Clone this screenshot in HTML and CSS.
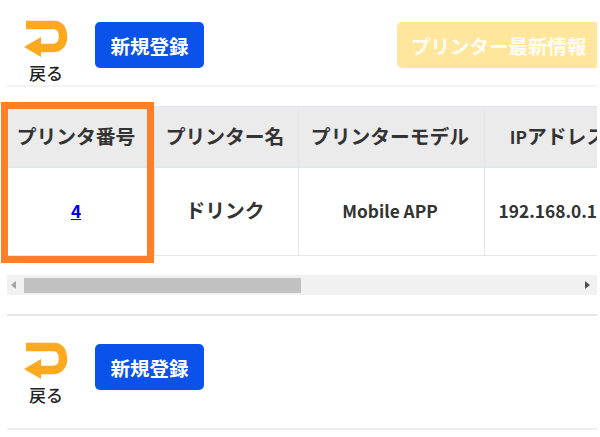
FILE: index.html
```html
<!DOCTYPE html>
<html lang="ja">

<head>
  <meta charset="UTF-8">
  <meta name="viewport" content="width=device-width, initial-scale=1.0">
  <title>プリンタ一覧</title>
  <link rel="stylesheet" href="styles.css">
</head>

<body>
  <div class="page">
    <div class="toolbar">
      <a class="back-link" href="#">
        <svg class="back-icon" width="44" height="38" viewBox="0 0 44 38">
          <path d="M2 5 H30 C37 5 39 11 39 17 C39 24 35 28 29 28 H14" fill="none" stroke="#ffa91f" stroke-width="8.5" />
          <path d="M0 27 L17 17 V37 Z" fill="#ffa91f" />
        </svg>
        <span>戻る</span>
      </a>
      <button class="btn btn-primary" type="button">新規登録</button>
      <button class="btn btn-warning" type="button">プリンター最新情報</button>
    </div>

    <div class="table-area">
      <div class="table-scroll">
        <table class="printer-table">
          <thead>
            <tr>
              <th class="col-no">プリンタ番号</th>
              <th class="col-name">プリンター名</th>
              <th class="col-model">プリンターモデル</th>
              <th class="col-ip"><span class="latin-head">IP</span>アドレス</th>
            </tr>
          </thead>
          <tbody>
            <tr>
              <td class="no-cell"><a class="printer-link" href="#">4</a></td>
              <td class="big-cell">ドリンク</td>
              <td>Mobile APP</td>
              <td>192.168.0.100</td>
            </tr>
          </tbody>
        </table>
      </div>
      <div class="highlight-box"></div>
    </div>

    <div class="scrollbar">
      <span class="arrow-left"></span>
      <div class="scroll-track">
        <div class="scroll-thumb"></div>
      </div>
      <span class="arrow-right"></span>
    </div>

    <div class="toolbar toolbar-bottom">
      <a class="back-link" href="#">
        <svg class="back-icon" width="44" height="38" viewBox="0 0 44 38">
          <path d="M2 5 H30 C37 5 39 11 39 17 C39 24 35 28 29 28 H14" fill="none" stroke="#ffa91f" stroke-width="8.5" />
          <path d="M0 27 L17 17 V37 Z" fill="#ffa91f" />
        </svg>
        <span>戻る</span>
      </a>
      <button class="btn btn-primary" type="button">新規登録</button>
    </div>
  </div>
</body>

</html>
```

FILE: styles.css
```css
body {
  font-family: "Noto Sans CJK JP", "Noto Sans", sans-serif;
  margin: 0;
  padding: 0;
  background-color: #fff;
  color: #333;
  overflow: hidden;
}

.page {
  width: 590px;
  margin-left: 7px;
}

.toolbar {
  display: flex;
  align-items: flex-start;
  height: 65px;
  padding-top: 20px;
  border-bottom: 2px solid #f3f3f3;
}

.toolbar-bottom {
  height: 86px;
  padding-top: 26px;
  margin-top: 19px;
  border-top: 2px solid #e6e6e6;
  border-bottom: 2px solid #efefef;
}

.back-link {
  display: flex;
  flex-direction: column;
  align-items: center;
  width: 44px;
  margin-left: 17px;
  margin-right: 27px;
  font-size: 17px;
  font-weight: 500;
  line-height: 20px;
  color: #222;
  text-decoration: none;
}

.back-icon {
  display: block;
  margin-bottom: 5px;
}

.btn {
  height: 46px;
  margin-top: 2px;
  padding: 0 14px;
  border: none;
  border-radius: 5px;
  font-family: inherit;
  font-size: 19.5px;
  font-weight: bold;
  white-space: nowrap;
}

.btn-primary {
  width: 109px;
  background-color: #0b52ea;
  color: #fff;
}

.btn-warning {
  width: 200px;
  margin-left: auto;
  border-radius: 5px 0 0 5px;
  background-color: #ffe69c;
  color: #fffdf5;
}

.table-area {
  position: relative;
  margin-top: 19px;
}

.table-scroll {
  overflow: hidden;
}

.printer-table {
  table-layout: fixed;
  width: 627px;
  border-collapse: collapse;
  text-align: center;
  font-size: 17.3px;
  font-weight: bold;
}

.printer-table th,
.printer-table td {
  box-sizing: border-box;
  padding: 0 3px 2px 0;
  border: 1px solid #e4e6ee;
  white-space: nowrap;
}

.printer-table th {
  height: 60px;
  background-color: #ebebeb;
  font-size: 19.8px;
  border-bottom-width: 2px;
}

.printer-table td {
  height: 89px;
}

.printer-table .col-no,
.printer-table .no-cell {
  padding-right: 10px;
}

.col-no {
  width: 147px;
}

.col-name {
  width: 144px;
}

.col-model {
  width: 186px;
}

.col-ip {
  width: 150px;
}

.latin-head {
  font-size: 17.3px;
}

.printer-table .big-cell {
  padding-bottom: 4px;
  font-size: 19.8px;
}

.printer-link {
  color: #0000ee;
}

.highlight-box {
  position: absolute;
  left: -6px;
  top: -4px;
  width: 139px;
  height: 147px;
  border: 7px solid #ff7f27;
}

.scrollbar {
  display: flex;
  align-items: center;
  height: 20px;
  margin-top: 19px;
  background-color: #f1f1f1;
}

.scroll-track {
  flex: 1;
  height: 15px;
}

.scroll-thumb {
  width: 277px;
  height: 15px;
  background-color: #c1c1c1;
}

.arrow-left {
  margin: 0 8px 0 4px;
  border-top: 4px solid transparent;
  border-bottom: 4px solid transparent;
  border-right: 5px solid #a3a3a3;
}

.arrow-right {
  margin: 0 7px 0 5px;
  border-top: 4px solid transparent;
  border-bottom: 4px solid transparent;
  border-left: 5px solid #505050;
}
```
